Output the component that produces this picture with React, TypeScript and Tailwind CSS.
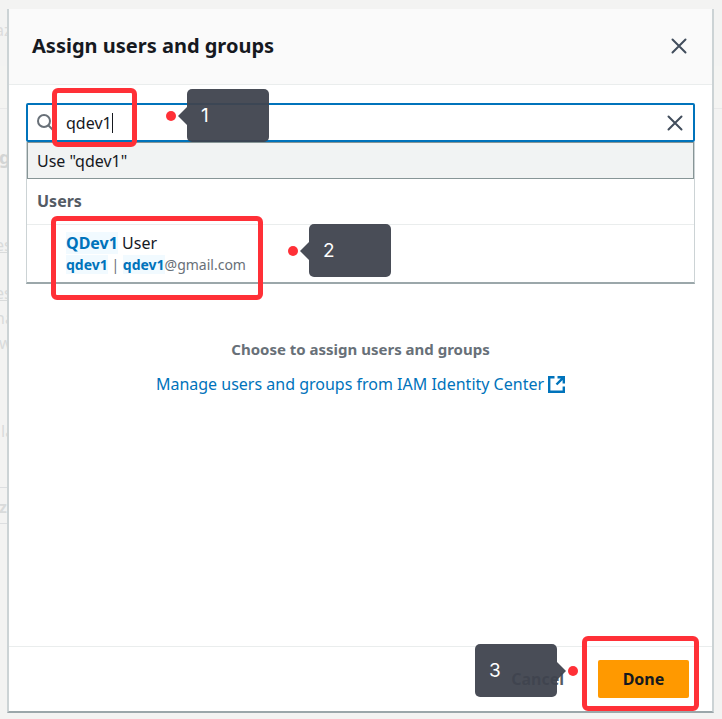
import type { ReactNode } from "react";

const ghostRows: { text: string; className: string }[] = [
  { text: "az", className: "h-[66px] pt-[19px] text-[#dcdcdc]" },
  { text: "", className: "h-[43px] bg-[#f4f4f2] border-b border-[#e9e9e9]" },
  { text: "g", className: "h-[97px] pl-[4px] pt-[37px] text-[18px] font-bold text-[#d3d5d5]" },
  { text: "es", className: "h-[76px] pt-[28px] underline" },
  { text: "es", className: "h-[25px] underline" },
  { text: "na", className: "h-[25px]" },
  { text: "w", className: "h-[88px] pl-[4px]" },
  { text: "la", className: "h-[67px] pl-[6px]" },
  { text: "z", className: "h-[37px] w-[60px] border-y border-[#dddfe1] pl-[4px] pt-[8px] font-bold" },
];

function CrossIcon() {
  return (
    <svg width="16" height="16" viewBox="0 0 16 16" fill="none" stroke="#414d5c" strokeWidth="2" strokeLinecap="round" aria-hidden="true">
      <path d="M1.5 1.5l13 13M14.5 1.5l-13 13" />
    </svg>
  );
}

function Callout({ step, className, side = "right" }: { step: string; className: string; side?: "left" | "right" }) {
  return (
    <div className={`pointer-events-none absolute z-20 flex items-center font-normal ${side === "left" ? "flex-row-reverse" : ""} ${className}`}>
      <span className="size-[10px] rounded-full bg-[#ff3037]" />
      <svg
        width="9"
        height="20"
        viewBox="0 0 9 20"
        className={side === "left" ? "mr-[2px] rotate-180" : "ml-[2px]"}
        aria-hidden="true"
      >
        <path d="M9 1v18L0 10z" fill="#3f434e" fillOpacity="0.95" />
      </svg>
      <span className="flex h-[53px] w-[82px] items-center rounded-[5px] bg-[#3f434e]/95 pl-[14px] font-['Inter',sans-serif] text-[19px] text-white">
        {step}
      </span>
    </div>
  );
}

function Highlight({ className }: { className: string }) {
  return <div className={`pointer-events-none absolute z-10 rounded-[6px] border-[5px] border-[#ff3037] ${className}`} />;
}

function Match({ children }: { children: ReactNode }) {
  return <mark className="bg-[#f1faff] font-bold text-[#0073bb]">{children}</mark>;
}

export default function App() {
  return (
    <div className="relative flex min-h-screen overflow-hidden bg-[#f3f3f2] pt-[9px] pr-[8px] pb-[6px] pl-[7px] font-['Noto_Sans',sans-serif] text-[16px] leading-[22px] text-[#16191f]">
      <div className="absolute inset-y-0 -left-[5px] right-0 flex flex-col overflow-hidden text-[#d9dbdb]" aria-hidden="true">
        {ghostRows.map((row, index) => (
          <div key={index} className={`shrink-0 ${row.className}`}>
            {row.text}
          </div>
        ))}
      </div>

      <section
        role="dialog"
        aria-labelledby="dialog-title"
        className="relative flex flex-1 flex-col border-x-2 border-b-2 border-x-[#ccd3d5] border-b-[#9ba7aa] bg-white"
      >
        <header className="flex h-[76px] items-center justify-between border-b border-[#eaeded] bg-[#fafafa] pr-[25px] pb-[2px] pl-[23px]">
          <h1 id="dialog-title" className="text-[20px] leading-[28px] font-bold">
            Assign users and groups
          </h1>
          <button type="button" aria-label="Close">
            <CrossIcon />
          </button>
        </header>

        <main className="flex flex-1 flex-col px-[17px] pt-[18px]">
          <div className="relative flex h-[39px] items-center rounded-[2px] border-2 border-[#0073bb] bg-white pr-[10px] pl-[9px]">
            <svg width="17" height="17" viewBox="0 0 17 17" fill="none" stroke="#687078" strokeWidth="2" aria-hidden="true">
              <circle cx="7" cy="7" r="6" />
              <path d="M11 11l5 5" />
            </svg>
            <input
              type="text"
              aria-label="Search users and groups"
              defaultValue="qdev1"
              className="min-w-0 flex-1 pl-[12px] outline-none"
            />
            <span className="absolute left-[84px] h-[20px] w-px bg-[#16191f]" />
            <button type="button" aria-label="Clear">
              <CrossIcon />
            </button>
            <Highlight className="-top-[17px] left-[24px] h-[59px] w-[85px]" />
            <Callout step="1" className="-top-[16px] left-[138px]" />
          </div>

          <ul className="border-x border-b-2 border-x-[#ccd3d5] border-b-[#9ba7aa] bg-white">
            <li className="border border-[#879596] bg-[#f1f3f3] px-[9px] pt-[7px] pb-[6px]">Use &quot;qdev1&quot;</li>
            <li>
              <h2 className="border-b border-[#eaeded] px-[10px] pt-[11px] pb-[12px] font-bold text-[#545b64]">Users</h2>
              <div className="relative pt-[7px] pb-[6px] pl-[39px]">
                <p>
                  <Match>QDev1</Match> User
                </p>
                <p className="text-[14px] text-[#687078]">
                  <Match>qdev1</Match> | <Match>qdev1</Match>@gmail.com
                </p>
                <Highlight className="-top-[9px] left-[24px] h-[84px] w-[212px]" />
                <Callout step="2" className="-top-px left-[261px]" />
              </div>
            </li>
          </ul>

          <div className="flex flex-col items-center gap-[13px] pt-[54px]">
            <p className="text-[15px] font-bold text-[#687078]">Choose to assign users and groups</p>
            <a href="#identity-center" className="flex items-center gap-[4px] text-[#0073bb]">
              Manage users and groups from IAM Identity Center
              <svg width="17" height="17" viewBox="0 0 17 17" fill="none" stroke="currentColor" strokeWidth="2.4" aria-hidden="true">
                <path d="M6.5 1.2H1.2v14.6h14.6v-5.3M9.5 1.2h6.3v6.3M15.8 1.2L8.5 8.5" />
              </svg>
            </a>
          </div>
        </main>

        <footer className="relative flex h-[65px] items-center justify-end gap-[34px] border-t border-[#eaeded] pr-[23px] font-bold">
          <button type="button" className="text-[#545b64]">
            Cancel
          </button>
          <button type="button" className="h-[38px] w-[91px] rounded-[2px] bg-[#ff9900]">
            Done
          </button>
          <Highlight className="-top-[11px] right-[13px] h-[75px] w-[117px]" />
          <Callout step="3" side="left" className="-top-[3px] right-[134px]" />
        </footer>
      </section>
    </div>
  );
}
